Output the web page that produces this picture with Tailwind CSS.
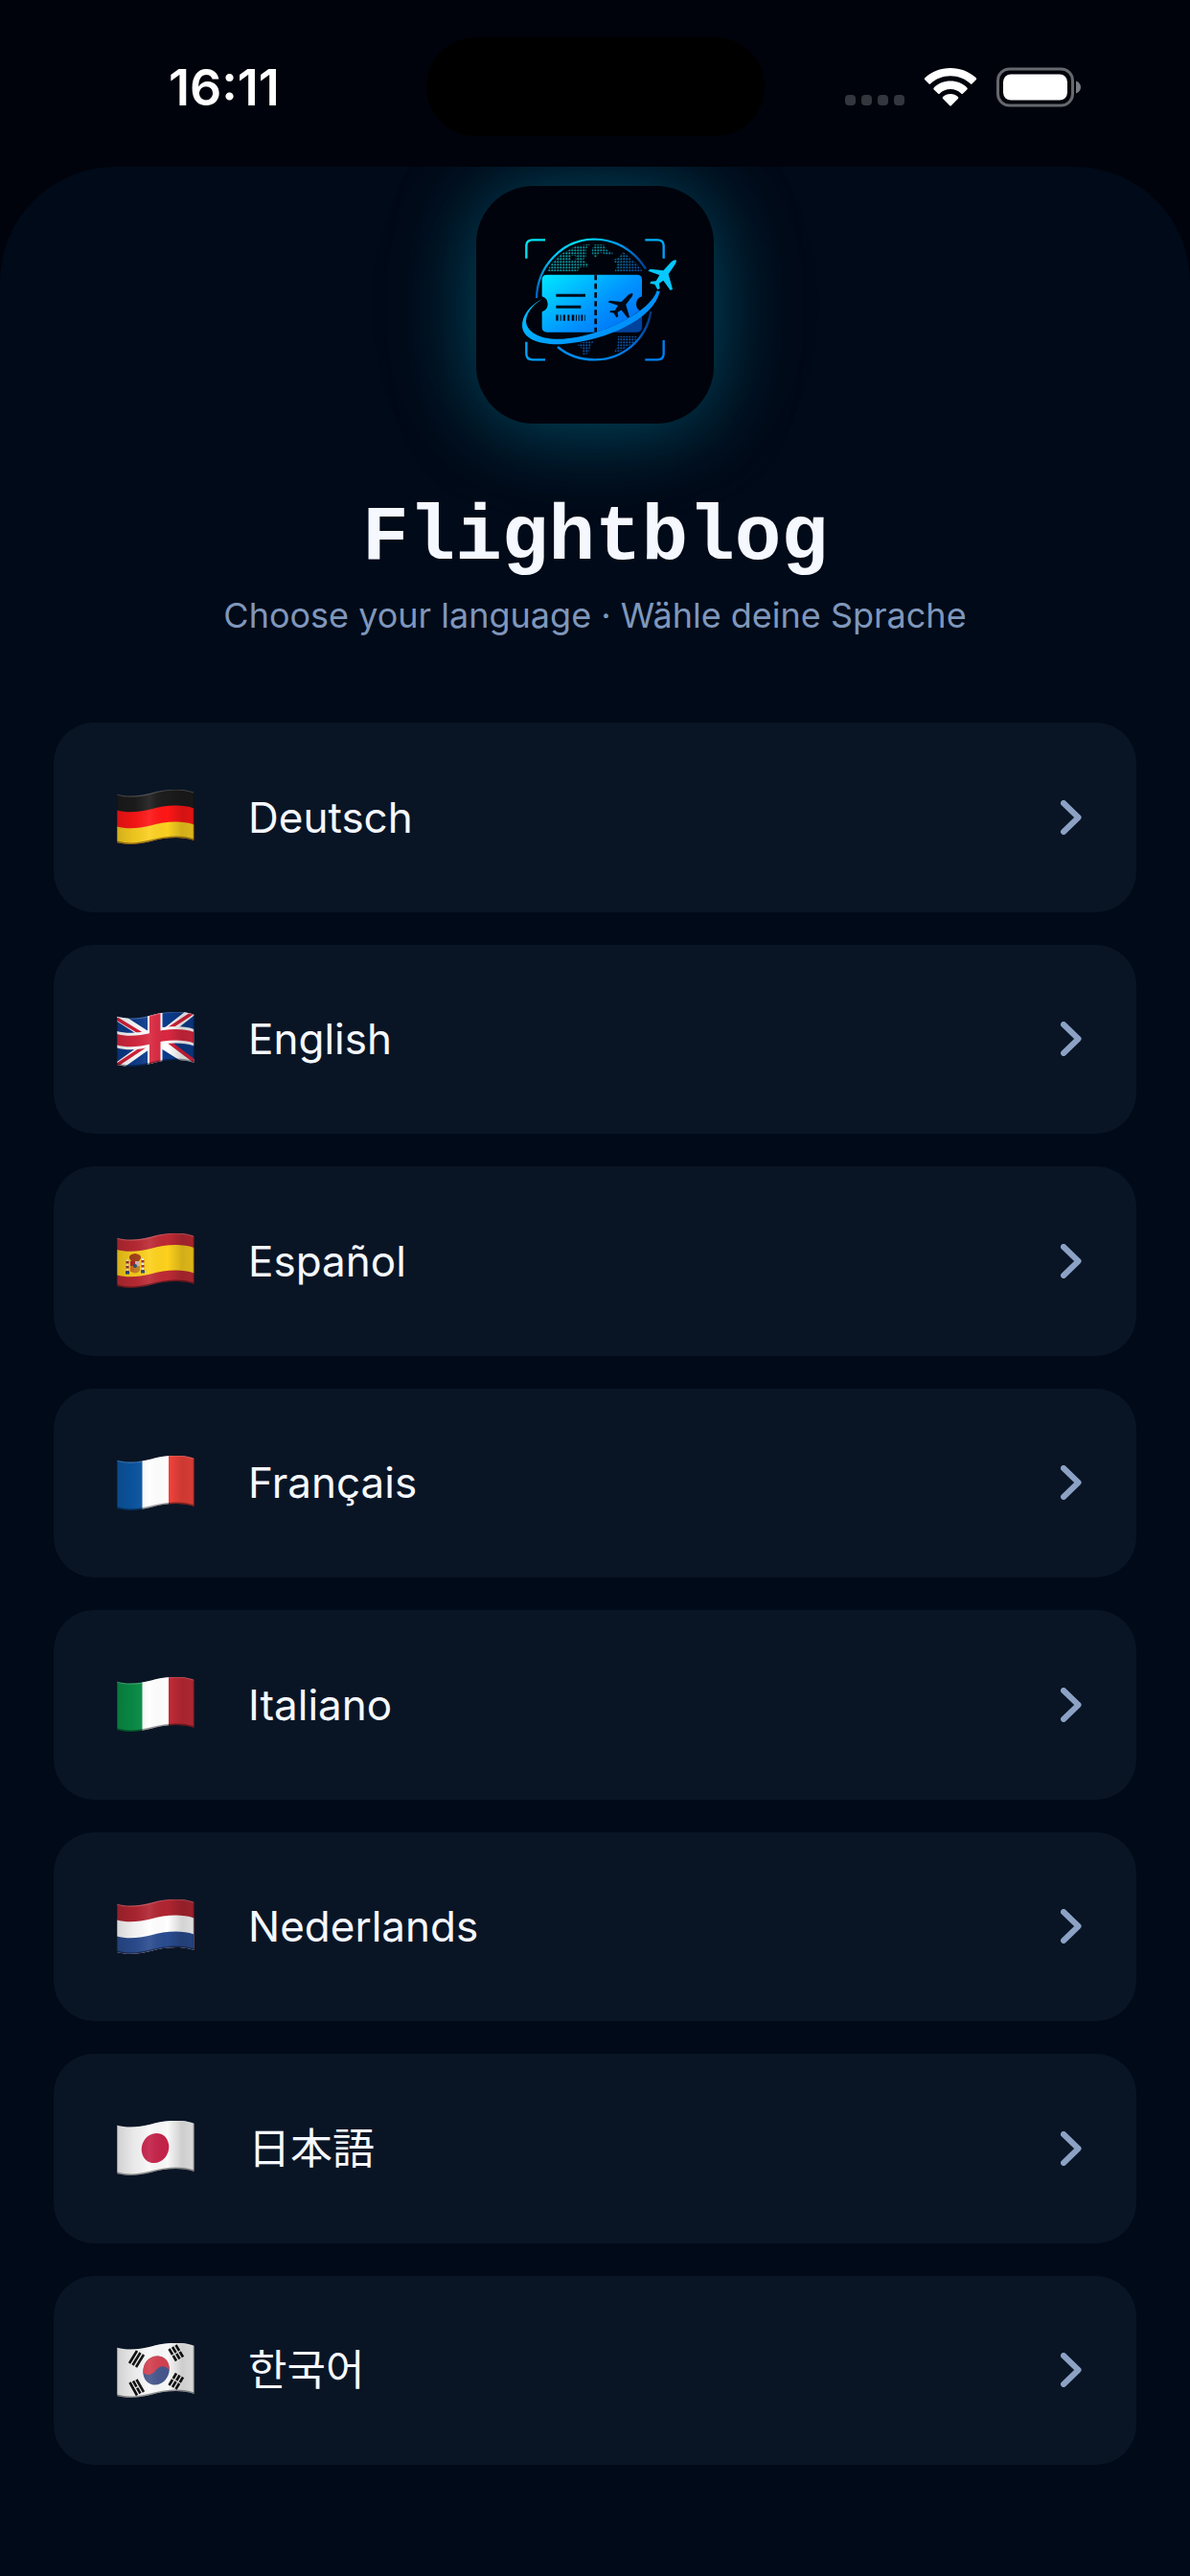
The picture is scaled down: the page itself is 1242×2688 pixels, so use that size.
<!DOCTYPE html>
<html lang="en">
<head>
<meta charset="utf-8">
<meta name="viewport" content="width=device-width, initial-scale=1">
<title>Flightblog</title>
<script src="https://cdn.jsdelivr.net/npm/@tailwindcss/browser@4"></script>
</head>
<body class="flex min-h-screen flex-col bg-[#00030b] font-['Inter','Noto_Sans_CJK_JP',sans-serif] text-[#f5f8ff]">

<!-- Shared flag shapes and shading -->
<svg class="absolute size-0" aria-hidden="true">
  <defs>
    <clipPath id="flag"><path d="M0 4.700c9 2.600 22 2.600 36-1.200c12-3.400 30-6 44.500-.8V53c-14.500-5.200-32.500-2.600-44.500.8c-14 3.800-27 3.800-36 1.200z"/></clipPath>
    <linearGradient id="fold">
      <stop offset="0" stop-color="#000" stop-opacity=".16"/>
      <stop offset=".22" stop-color="#000" stop-opacity=".06"/>
      <stop offset=".42" stop-color="#fff" stop-opacity=".08"/>
      <stop offset=".65" stop-color="#000" stop-opacity="0"/>
      <stop offset=".84" stop-color="#000" stop-opacity=".17"/>
      <stop offset="1" stop-color="#000" stop-opacity=".12"/>
    </linearGradient>
    <g id="shade">
      <path fill="url(#fold)" d="M0 0H81V57H0z"/>
      <path fill="none" stroke="#fff" stroke-opacity=".2" stroke-width="2" d="M0 4.700c9 2.600 22 2.600 36-1.200c12-3.400 30-6 44.500-.8"/>
      <path fill="none" stroke="#000" stroke-opacity=".4" stroke-width="3" d="M80.500 53c-14.500-5.200-32.500-2.600-44.500.8c-14 3.800-27 3.800-36 1.200"/>
      <path fill="none" stroke="#000" stroke-opacity=".25" stroke-width="2" d="M0 0V57M80.500 0V57"/>
    </g>
  </defs>
</svg>

<header class="grid h-[174px] shrink-0 grid-cols-3 items-center pb-[4px]">
  <time class="pt-[14px] pl-[176px] text-[52px] leading-[60px] font-semibold text-white">16:11</time>
  <div class="mt-[11px] h-[103px] w-[353px] justify-self-center rounded-full bg-black"></div>
  <div class="flex items-center gap-[20px] justify-self-end pt-[11px] pr-[113px]">
    <svg class="h-[42px] w-[62px]" viewBox="0 0 62 42" fill="#33363e" aria-label="No signal"><rect y="29" width="11" height="11" rx="4"/><rect x="17" y="29" width="11" height="11" rx="4"/><rect x="34" y="29" width="11" height="11" rx="4"/><rect x="51" y="29" width="11" height="11" rx="4"/></svg>
    <svg class="h-[42px] w-[56px]" viewBox="0 0 56 42" fill="#fff" aria-label="Wi-Fi"><path d="M28 1C17.500 1 8 5 1.300 11.300q-1 1 0 2l4 4q1 1 2 0C12.500 12.300 19.800 9.200 28 9.200s15.500 3.100 20.700 8.100q1 1 2 0l4-4q1-1 0-2C48 5 38.500 1 28 1z"/><path d="M28 14.600c-6.700 0-12.800 2.600-17.300 6.800q-1 1 0 2l4.200 4.200q1 1 2 0c2.900-2.800 6.800-4.500 11.100-4.500s8.200 1.700 11.100 4.500q1 1 2 0l4.200-4.200q1-1 0-2C40.800 17.200 34.700 14.600 28 14.600z"/><path d="M28 28c-3 0-5.800 1.200-7.900 3q-1 1 0 2l6.900 7.100q1 1 2 0l6.900-7.100q1-1 0-2C33.800 29.200 31 28 28 28z"/></svg>
    <svg class="h-[42px] w-[89px]" viewBox="0 0 89 42" aria-label="Battery full"><rect x="1.500" y="2" width="78" height="38" rx="12" fill="none" stroke="#66686e" stroke-width="3"/><rect x="7" y="7.500" width="67" height="27" rx="8" fill="#fff"/><path d="M83 14.500c3 1 5 3.500 5 6.500s-2 5.500-5 6.500z" fill="#7a7c81"/></svg>
  </div>
</header>

<main class="flex grow flex-col items-center overflow-hidden rounded-t-[120px] bg-[#000a18] px-[56px] pt-[20px] pb-[116px]">
  <div class="size-[248px] shrink-0 rounded-[60px] bg-[#00030b] shadow-[0_4px_88px_rgba(0,200,240,0.34),0_0_160px_rgba(0,180,220,0.06)]">
    <svg class="size-full" viewBox="-99 -108 744 744" role="img" aria-label="Flightblog logo">
      <defs>
        <linearGradient id="line" gradientUnits="userSpaceOnUse" x1="100" y1="50" x2="380" y2="440"><stop offset="0" stop-color="#00e5f5"/><stop offset=".55" stop-color="#00a4ff"/><stop offset="1" stop-color="#0080f5"/></linearGradient>
        <linearGradient id="card" x1="0" y1="0" x2="1" y2=".8"><stop offset="0" stop-color="#00e8ff"/><stop offset=".6" stop-color="#0095ff"/><stop offset="1" stop-color="#006ff5"/></linearGradient>
        <linearGradient id="globeTop" gradientUnits="userSpaceOnUse" x1="90" y1="250" x2="435" y2="160"><stop offset="0" stop-color="#0060c0"/><stop offset=".2" stop-color="#00bdf0"/><stop offset=".5" stop-color="#00e0fa"/><stop offset=".85" stop-color="#0095f0"/><stop offset="1" stop-color="#003c90"/></linearGradient>
        <linearGradient id="globeLow" gradientUnits="userSpaceOnUse" x1="440" y1="285" x2="250" y2="440"><stop offset="0" stop-color="#003a80"/><stop offset=".5" stop-color="#0078e8"/><stop offset="1" stop-color="#008cf5"/></linearGradient>
        <linearGradient id="land" gradientUnits="userSpaceOnUse" x1="130" y1="80" x2="420" y2="170"><stop offset="0" stop-color="#0aa5a8"/><stop offset=".5" stop-color="#0b8a94"/><stop offset="1" stop-color="#0b459a"/></linearGradient>
        <pattern id="grid" width="9" height="9" patternUnits="userSpaceOnUse"><rect x="1" y="1" width="6" height="6" rx="2" fill="#fff"/></pattern>
        <mask id="dots" maskUnits="userSpaceOnUse" x="0" y="0" width="570" height="480"><rect width="570" height="480" fill="url(#grid)"/></mask>
        <path id="plane" d="M527 124c2 5-1 12-7 19l-17 25l13 47l-7 4l-22-31l-13 9l2 16l-7 4l-9-17l-15-3l3-6l16-1l11-19l-36-13l7-6l41 5l22-24c6-7 14-11 18-9z"/>
      </defs>
      <g fill="none" stroke="url(#line)" stroke-width="7">
        <path d="M58 119V80q0-19 19-19H117M430 61H469q19 0 19 19V119M488 375V417q0 19-19 19H430M58 380V417q0 19 19 19H117"/>
        <path stroke="url(#globeTop)" d="M90 243C92 142 173 59 270 59C338 59 395 93 432 152"/>
        <path stroke="url(#globeLow)" d="M448 285C434 372 360 436 272 436C228 436 188 423 156 396"/>
      </g>
      <g mask="url(#dots)" fill="url(#land)">
        <path d="M123 160l14-26 30-30 24-12 22-12 45-6-12 14v24l-10 12 17 14v8h-25l-10 14zM198 110v14h14v-14z" fill-rule="evenodd"/>
        <path d="M264 90l6-14h30l12 18 16 6v8h-18l-22-8-12 18-12-12zM335 160l7-22-14-14 20-8 12-18 16 12 10 12 15 10 16 18 5 10z"/>
        <path fill="#0a4f9c" d="M218 390l12-8 40-6-12 20-4 20-18 5-4-20zM345 362h60l-10 24-20 8-18 14-24 6 10-24z"/>
      </g>
      <path fill="url(#card)" d="M123 170H404q16 0 16 16V238a25 25 0 0 0 0 48V334q0 16-16 16H123q-16 0-16-16V286a25 25 0 0 0 0-48V186q0-16 16-16z"/>
      <g stroke="#000a18" fill="none"><path stroke-width="8" stroke-dasharray="17 10.500" d="M275 170V350"/><path stroke-width="9" d="M151 235h92M151 271h78"/><path stroke-width="19" stroke-dasharray="7 6 3 6 7 7 6 7 8 5 3 5 3 5 6 6" d="M151 305h92"/></g>
      <use href="#plane" fill="#000a18" transform="translate(-73 128) scale(.88 .81)"/>
      <path fill="#000a30" fill-opacity=".45" d="M275 350C345 330 400 295 425 270V345q-5 8-18 8z"/>
      <path fill="url(#line)" d="M113 243C65 266 44 302 45 330C47 375 108 391 172 387C315 376 458 306 476 222L467 220C448 282 305 362 172 371C104 375 58 350 57 315C59 284 86 258 113 243z"/>
      <use href="#plane" fill="#08c8ff"/>
    </svg>
  </div>

  <h1 class="mt-[72px] font-['Liberation_Mono',monospace] text-[81px] leading-[96px] font-bold">Flightblog</h1>
  <p class="mt-[8px] text-[36px] leading-[48px] text-[#7f97bc]">Choose your language · Wähle deine Sprache</p>

  <ul class="mt-[88px] grid w-full grow auto-rows-fr gap-[34px] text-[44px] leading-[52px]">
    <li class="flex"><button type="button" lang="de" class="flex grow items-center rounded-[42px] bg-[#091525] py-[60px] pr-[57px] pl-[66px] text-left">
      <svg class="h-[57px] w-[81px]" viewBox="0 0 81 57" aria-hidden="true"><g clip-path="url(#flag)"><path fill="#1c1c1c" d="M0 0H81V57H0z"/><path fill="#ff1616" d="M0 21.400c9 2.600 22 2.600 36-1.200c12-3.400 30-6 44.500-.8V57H0z"/><path fill="#fbd020" d="M0 38.500c9 2.600 22 2.600 36-1.200c12-3.400 30-6 44.500-.8V57H0z"/><use href="#shade"/></g></svg>
      <span class="ml-[56px] grow">Deutsch</span>
      <svg class="h-[36px] w-[22px]" viewBox="0 0 22 36" fill="none" stroke="#8ca2c5" stroke-width="6" stroke-linecap="round" stroke-linejoin="round" aria-hidden="true"><path d="M3 3l15.500 15L3 33"/></svg>
    </button></li>
    <li class="flex"><button type="button" lang="en" class="flex grow items-center rounded-[42px] bg-[#091525] py-[60px] pr-[57px] pl-[66px] text-left">
      <svg class="h-[57px] w-[81px]" viewBox="0 0 81 57" aria-hidden="true"><g clip-path="url(#flag)"><path fill="#0c3b8c" d="M0 0H81V57H0z"/><path fill="none" stroke="#fff" stroke-width="9" d="M-2 3L40 30L83 -4M-2 59L40 29L83 56"/><path fill="none" stroke="#d8203a" stroke-width="3.500" d="M0 7L28 24M50 20L82 -1M-1 56L32 34M50 28L83 53"/><path fill="#fff" d="M0 20c9 2.600 22 2.600 36-1.200c12-3.400 30-6 44.500-.8V35.500c-14.500-5.200-32.500-2.600-44.500.8c-14 3.800-27 3.800-36 1.200zM32 0h15.500V57H32z"/><path fill="#d92840" d="M0 23c9 2.600 22 2.600 36-1.200c12-3.400 30-6 44.500-.8V32.500c-14.500-5.200-32.500-2.600-44.500.8c-14 3.800-27 3.800-36 1.200zM34 0h11.500V57H34z"/><use href="#shade"/></g></svg>
      <span class="ml-[56px] grow">English</span>
      <svg class="h-[36px] w-[22px]" viewBox="0 0 22 36" fill="none" stroke="#8ca2c5" stroke-width="6" stroke-linecap="round" stroke-linejoin="round" aria-hidden="true"><path d="M3 3l15.500 15L3 33"/></svg>
    </button></li>
    <li class="flex"><button type="button" lang="es" class="flex grow items-center rounded-[42px] bg-[#091525] py-[60px] pr-[57px] pl-[66px] text-left">
      <svg class="h-[57px] w-[81px]" viewBox="0 0 81 57" aria-hidden="true"><g clip-path="url(#flag)"><path fill="#bd2a34" d="M0 0H81V57H0z"/><path fill="#fdd11c" d="M0 17c9 2.600 22 2.600 36-1.200c12-3.400 30-6 44.500-.8V41.500c-14.500-5.200-32.500-2.600-44.500.8c-14 3.800-27 3.800-36 1.200z"/><path fill="#a8431c" d="M13 26q-1-4 6-5q7 1 6 5l-2 3h-8z"/><path fill="#c9862a" d="M14 29h10v10q-5 5-10 0z"/><path fill="#b02a30" d="M14 29h5v5h-5z"/><path fill="#d9b5b0" d="M19 29h5v5h-5z"/><path fill="#e07018" d="M14 35h4v5h-4z"/><circle cx="19" cy="34" r="2" fill="#235a78"/><path stroke="#ece8e0" stroke-width="2" d="M11 27V40M27 26V39"/><path stroke="#98303a" stroke-width="3" stroke-dasharray="2.500 2.500" d="M11 29V40M27 28V39"/><path stroke="#24487c" stroke-width="3" d="M9 41h4M25 40h4"/><use href="#shade"/></g></svg>
      <span class="ml-[56px] grow">Español</span>
      <svg class="h-[36px] w-[22px]" viewBox="0 0 22 36" fill="none" stroke="#8ca2c5" stroke-width="6" stroke-linecap="round" stroke-linejoin="round" aria-hidden="true"><path d="M3 3l15.500 15L3 33"/></svg>
    </button></li>
    <li class="flex"><button type="button" lang="fr" class="flex grow items-center rounded-[42px] bg-[#091525] py-[60px] pr-[57px] pl-[66px] text-left">
      <svg class="h-[57px] w-[81px]" viewBox="0 0 81 57" aria-hidden="true"><g clip-path="url(#flag)"><path fill="#0c58a6" d="M0 0H27V57H0z"/><path fill="#fff" d="M26.500 0H54V57H26.500z"/><path fill="#f5443c" d="M54 0H81V57H54z"/><use href="#shade"/></g></svg>
      <span class="ml-[56px] grow">Français</span>
      <svg class="h-[36px] w-[22px]" viewBox="0 0 22 36" fill="none" stroke="#8ca2c5" stroke-width="6" stroke-linecap="round" stroke-linejoin="round" aria-hidden="true"><path d="M3 3l15.500 15L3 33"/></svg>
    </button></li>
    <li class="flex"><button type="button" lang="it" class="flex grow items-center rounded-[42px] bg-[#091525] py-[60px] pr-[57px] pl-[66px] text-left">
      <svg class="h-[57px] w-[81px]" viewBox="0 0 81 57" aria-hidden="true"><g clip-path="url(#flag)"><path fill="#0a9048" d="M0 0H27V57H0z"/><path fill="#fff" d="M26.500 0H54V57H26.500z"/><path fill="#c62c38" d="M54 0H81V57H54z"/><use href="#shade"/></g></svg>
      <span class="ml-[56px] grow">Italiano</span>
      <svg class="h-[36px] w-[22px]" viewBox="0 0 22 36" fill="none" stroke="#8ca2c5" stroke-width="6" stroke-linecap="round" stroke-linejoin="round" aria-hidden="true"><path d="M3 3l15.500 15L3 33"/></svg>
    </button></li>
    <li class="flex"><button type="button" lang="nl" class="flex grow items-center rounded-[42px] bg-[#091525] py-[60px] pr-[57px] pl-[66px] text-left">
      <svg class="h-[57px] w-[81px]" viewBox="0 0 81 57" aria-hidden="true"><g clip-path="url(#flag)"><path fill="#b02531" d="M0 0H81V57H0z"/><path fill="#fff" d="M0 21.400c9 2.600 22 2.600 36-1.200c12-3.400 30-6 44.500-.8V57H0z"/><path fill="#2a4c90" d="M0 38.500c9 2.600 22 2.600 36-1.200c12-3.400 30-6 44.500-.8V57H0z"/><use href="#shade"/></g></svg>
      <span class="ml-[56px] grow">Nederlands</span>
      <svg class="h-[36px] w-[22px]" viewBox="0 0 22 36" fill="none" stroke="#8ca2c5" stroke-width="6" stroke-linecap="round" stroke-linejoin="round" aria-hidden="true"><path d="M3 3l15.500 15L3 33"/></svg>
    </button></li>
    <li class="flex"><button type="button" lang="ja" class="flex grow items-center rounded-[42px] bg-[#091525] py-[60px] pr-[57px] pl-[66px] text-left">
      <svg class="h-[57px] w-[81px]" viewBox="0 0 81 57" aria-hidden="true"><g clip-path="url(#flag)"><path fill="#f8f8f8" d="M0 0H81V57H0z"/><ellipse cx="40" cy="28.500" rx="14" ry="15.800" transform="rotate(22 40 28.500)" fill="#c42148"/><use href="#shade"/></g></svg>
      <span class="ml-[56px] grow">日本語</span>
      <svg class="h-[36px] w-[22px]" viewBox="0 0 22 36" fill="none" stroke="#8ca2c5" stroke-width="6" stroke-linecap="round" stroke-linejoin="round" aria-hidden="true"><path d="M3 3l15.500 15L3 33"/></svg>
    </button></li>
    <li class="flex"><button type="button" lang="ko" class="flex grow items-center rounded-[42px] bg-[#091525] py-[60px] pr-[57px] pl-[66px] text-left">
      <svg class="h-[57px] w-[81px]" viewBox="0 0 81 57" aria-hidden="true"><g clip-path="url(#flag)"><path fill="#f8f8f8" d="M0 0H81V57H0z"/><g transform="rotate(22 41 28.500)"><ellipse cx="41" cy="28.500" rx="13.500" ry="15.300" fill="#45568c"/></g><path fill="#d2404f" d="M28 31C26 21 34 12.500 43 13.500C51 14 56 21 54 28C51 23 45 23 41 28C37 34 30 34 28 31z"/><g stroke="#111" stroke-width="2.600" fill="none"><path d="M13 21l8-13M16.500 23l8-13M20 25l8-13"/><path stroke-dasharray="7 1.200" d="M54.500 6l7.500 12.500M58 4l7.500 12.500M61.500 2l7.500 12.500"/><path d="M13.500 41l7.500 13.500M20.500 38l7.500 13"/><path stroke-dasharray="7 1.200" d="M17 39.500l7.500 13"/><path stroke-dasharray="7 1.200" d="M54.500 44l7.500-12.500M58 46l7.500-12.500M61.500 48l7.500-12.500"/></g><use href="#shade"/></g></svg>
      <span class="ml-[56px] grow font-['Inter','Noto_Sans_CJK_KR',sans-serif]">한국어</span>
      <svg class="h-[36px] w-[22px]" viewBox="0 0 22 36" fill="none" stroke="#8ca2c5" stroke-width="6" stroke-linecap="round" stroke-linejoin="round" aria-hidden="true"><path d="M3 3l15.500 15L3 33"/></svg>
    </button></li>
  </ul>
</main>
</body>
</html>
